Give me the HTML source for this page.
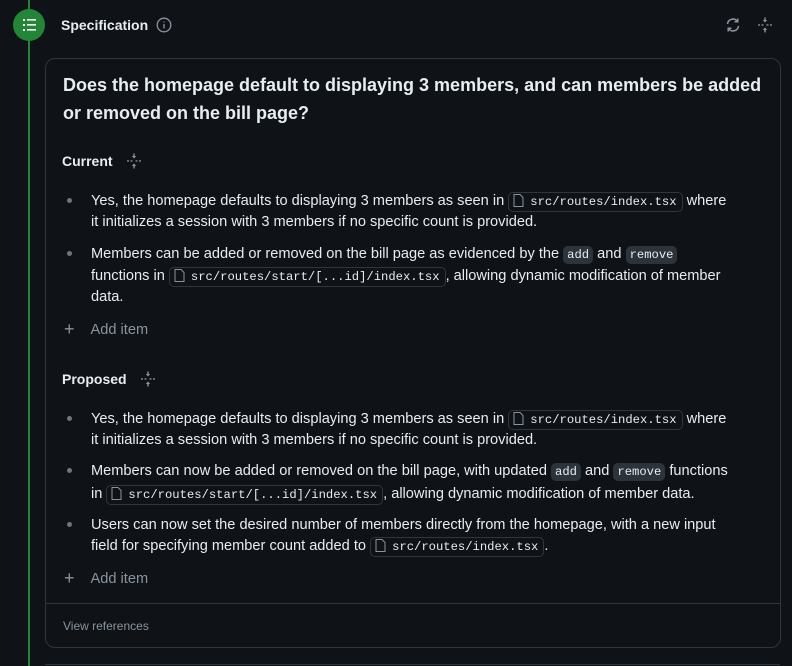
<!DOCTYPE html>
<html><head><meta charset="utf-8"><style>
*{box-sizing:border-box;margin:0;padding:0}
body{width:792px;height:666px;background:#0f1216;font-family:"Liberation Sans",sans-serif;color:#e6edf3;position:relative;overflow:hidden}
.line{position:absolute;left:28px;top:0;width:2px;height:666px;background:#238636}
.circ{position:absolute;left:13px;top:9px;width:32px;height:32px;border-radius:50%;background:#238636}
.hdr{position:absolute;left:61px;top:17px;font-size:14px;font-weight:bold}
.card{position:absolute;left:45px;top:58px;width:736px;height:590px;border:1px solid #30363d;border-radius:10px}
.title{position:absolute;left:17px;top:12px;font-size:18px;font-weight:bold;line-height:28px;width:700px}
.sec{position:absolute;left:16px;font-size:14px;font-weight:bold}
.l{position:absolute;left:45px;font-size:14.6px;line-height:20px;white-space:nowrap}
.b{position:absolute;left:21px;width:5px;height:5px;border-radius:50%;background:#6e7681}
.f{font-family:"Liberation Mono",monospace;font-size:12.2px;border:1px solid #30363d;border-radius:5px;padding:1px 5px 1px 4px;line-height:16px;display:inline-block}
.f svg{vertical-align:-2px;margin-right:6px}
.c{font-family:"Liberation Mono",monospace;font-size:12.2px;background:#2d333b;border-radius:5px;padding:1px 4px;line-height:16px;display:inline-block}
.add{position:absolute;left:18px;font-size:14.6px;color:#8b949e}
.add b{font-weight:normal;font-size:18px;margin-right:16px;vertical-align:-1px}
.div{position:absolute;left:0;right:0;top:544px;border-top:1px solid #30363d}
.vr{position:absolute;left:17px;top:560px;font-size:12px;color:#8b949e}
</style></head><body>
<div class="line"></div>
<div class="circ"><svg width="32" height="32" viewBox="0 0 32 32" fill="#fff"><rect x="10" y="10" width="2" height="2"/><rect x="10" y="15" width="2" height="2"/><rect x="10" y="20" width="2" height="2"/><rect x="14" y="10" width="9" height="1.6"/><rect x="14" y="15" width="9" height="1.6"/><rect x="14" y="20" width="9" height="1.6"/></svg></div>
<div class="hdr">Specification <svg width="16" height="16" viewBox="0 0 16 16" style="vertical-align:-3px;margin-left:4px" fill="none" stroke="#8b949e" stroke-width="1.3"><circle cx="8" cy="8" r="6.8"/><path d="M8 7v4.5M8 4.5v1"/></svg></div>
<svg style="position:absolute;left:725px;top:17px" width="16" height="16" viewBox="0 0 16 16" fill="none" stroke="#8b949e" stroke-width="1.5"><path d="M2.5 7A5.5 5.5 0 0 1 12.5 4.5M13.5 9A5.5 5.5 0 0 1 3.5 11.5"/><path d="M12.8 1.5v3.3H9.5M3.2 14.5v-3.3h3.3"/></svg>
<svg style="position:absolute;left:757px;top:17px" width="16" height="16" viewBox="0 0 16 16" fill="#8b949e"><path d="M8 5.5L5.8 3h1.5V0.5h1.4V3h1.5zM8 10.5l-2.2 2.5h1.5v2.5h1.4V13h1.5z"/><rect x="1" y="7.3" width="2" height="1.3"/><rect x="4.5" y="7.3" width="2" height="1.3"/><rect x="9.5" y="7.3" width="2" height="1.3"/><rect x="13" y="7.3" width="2" height="1.3"/></svg>
<div class="card">
<div class="title">Does the homepage default to displaying 3 members, and can members be added or removed on the bill page?</div>
<div class="sec" style="top:94px">Current <svg width="16" height="16" viewBox="0 0 16 16" fill="#8b949e" style="vertical-align:-3px;margin-left:10px"><path d="M8 5.5L5.8 3h1.5V0.5h1.4V3h1.5zM8 10.5l-2.2 2.5h1.5v2.5h1.4V13h1.5z"/><rect x="1" y="7.3" width="2" height="1.3"/><rect x="4.5" y="7.3" width="2" height="1.3"/><rect x="9.5" y="7.3" width="2" height="1.3"/><rect x="13" y="7.3" width="2" height="1.3"/></svg></div>

<div class="b" style="top:139px"></div>
<div class="l" style="top:132px">Yes, the homepage defaults to displaying 3 members as seen in <span class="f"><svg width="11" height="13" viewBox="0 0 11 13" fill="none" stroke="#8b949e"><path d="M1 .5h6l3 3v9H1z"/></svg>src/routes/index.tsx</span> where</div>
<div class="l" style="top:153px">it initializes a session with 3 members if no specific count is provided.</div>
<div class="b" style="top:192px"></div>
<div class="l" style="top:185px">Members can be added or removed on the bill page as evidenced by the <span class="c">add</span> and <span class="c">remove</span></div>
<div class="l" style="top:207px">functions in <span class="f"><svg width="11" height="13" viewBox="0 0 11 13" fill="none" stroke="#8b949e"><path d="M1 .5h6l3 3v9H1z"/></svg>src/routes/start/[...id]/index.tsx</span>, allowing dynamic modification of member</div>
<div class="l" style="top:228px">data.</div>
<div class="add" style="top:260px"><b>+</b>Add item</div>

<div class="sec" style="top:312px">Proposed <svg width="16" height="16" viewBox="0 0 16 16" fill="#8b949e" style="vertical-align:-3px;margin-left:10px"><path d="M8 5.5L5.8 3h1.5V0.5h1.4V3h1.5zM8 10.5l-2.2 2.5h1.5v2.5h1.4V13h1.5z"/><rect x="1" y="7.3" width="2" height="1.3"/><rect x="4.5" y="7.3" width="2" height="1.3"/><rect x="9.5" y="7.3" width="2" height="1.3"/><rect x="13" y="7.3" width="2" height="1.3"/></svg></div>
<div class="b" style="top:357px"></div>
<div class="l" style="top:350px">Yes, the homepage defaults to displaying 3 members as seen in <span class="f"><svg width="11" height="13" viewBox="0 0 11 13" fill="none" stroke="#8b949e"><path d="M1 .5h6l3 3v9H1z"/></svg>src/routes/index.tsx</span> where</div>
<div class="l" style="top:371px">it initializes a session with 3 members if no specific count is provided.</div>
<div class="b" style="top:409px"></div>
<div class="l" style="top:402px">Members can now be added or removed on the bill page, with updated <span class="c">add</span> and <span class="c">remove</span> functions</div>
<div class="l" style="top:425px">in <span class="f"><svg width="11" height="13" viewBox="0 0 11 13" fill="none" stroke="#8b949e"><path d="M1 .5h6l3 3v9H1z"/></svg>src/routes/start/[...id]/index.tsx</span>, allowing dynamic modification of member data.</div>
<div class="b" style="top:463px"></div>
<div class="l" style="top:456px">Users can now set the desired number of members directly from the homepage, with a new input</div>
<div class="l" style="top:477px">field for specifying member count added to <span class="f"><svg width="11" height="13" viewBox="0 0 11 13" fill="none" stroke="#8b949e"><path d="M1 .5h6l3 3v9H1z"/></svg>src/routes/index.tsx</span>.</div>
<div class="add" style="top:509px"><b>+</b>Add item</div>
<div class="div"></div>
<div class="vr">View references</div>
</div>
<div style="position:absolute;left:45px;right:12px;top:664px;border-top:1px solid #30363d"></div>
</body></html>
